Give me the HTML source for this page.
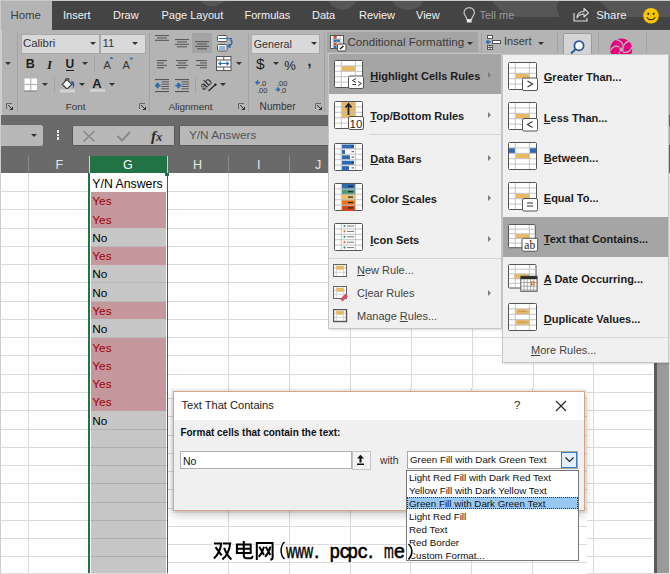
<!DOCTYPE html>
<html><head><meta charset="utf-8">
<style>
*{box-sizing:border-box;margin:0;padding:0}
html,body{width:670px;height:574px;overflow:hidden;background:#fff}
body{position:relative;font-family:"Liberation Sans",sans-serif;color:#222}
.a{position:absolute}
.t{position:absolute;white-space:nowrap;line-height:1}
#tabbar{left:0;top:0;width:670px;height:29.5px;background:#444}
#ribbon{left:0;top:29.5px;width:670px;height:85.5px;background:#b4b4b4}
#fbar{left:0;top:115px;width:670px;height:58px;background:#6a6a6a}
.tab{position:absolute;top:9.5px;font-size:11px;color:#f2f2f2;white-space:nowrap;line-height:1}
.vl{position:absolute;width:1px;background:#9e9e9e}
.hl{position:absolute;height:1px;background:#dadada}
.gl{position:absolute;width:1px;background:#dadada}
.cell{position:absolute;left:89px;width:78px;height:18.3px;font-size:12px;line-height:18.3px;padding-left:3px}
.menu{background:#f0f0f0;border:1px solid #c6c6c6}
.mi{position:absolute;font-size:11px;font-weight:bold;color:#1c1c1c;white-space:nowrap;line-height:1}
.mr{position:absolute;font-size:11px;color:#444;white-space:nowrap;line-height:1}
.arr{position:absolute;width:0;height:0;border-top:3.5px solid transparent;border-bottom:3.5px solid transparent;border-left:3.5px solid #555}
.dd{position:absolute;width:0;height:0;border-left:3px solid transparent;border-right:3px solid transparent;border-top:3px solid #333}
.li{position:absolute;left:2px;font-size:9.8px;color:#111;white-space:nowrap;line-height:12.9px;height:12.9px;width:169px;padding-left:1px}
</style></head><body>
<!-- TAB BAR -->
<div id="tabbar" class="a"></div>
<svg class="a" style="left:0;top:0" width="670" height="30">
<g fill="#565656">
<path d="M200 0 C204 6 212 8 218 5 C222 3 226 0 228 0 Z"/>
<path d="M328 0 C332 8 342 12 350 8 C354 5 356 2 358 0 Z"/>
<path d="M392 0 C396 10 410 13 420 6 L424 0 Z"/>
<path d="M492 0 C498 10 505 17 520 17 L560 17 C556 10 556 4 560 0 Z"/>
<path d="M598 0 C606 6 610 17 630 17 L670 17 L670 0 Z"/>
</g>
</svg>
<div class="a" style="left:0;top:0;width:670px;height:1.2px;background:#c9c9c9"></div>
<div class="a" style="left:0;top:0;width:1.2px;height:30px;background:#c9c9c9"></div>
<div class="a" style="left:1.2px;top:1.2px;width:51px;height:28.5px;background:#b4b4b4"></div>
<div class="tab" style="left:10.5px;top:9.8px;font-size:11.4px;color:#3e3e3e">Home</div>
<div class="tab" style="left:63px">Insert</div>
<div class="tab" style="left:113px">Draw</div>
<div class="tab" style="left:161.5px">Page Layout</div>
<div class="tab" style="left:244.5px">Formulas</div>
<div class="tab" style="left:312px">Data</div>
<div class="tab" style="left:359px">Review</div>
<div class="tab" style="left:416px">View</div>
<svg class="a" style="left:463px;top:6.5px" width="13" height="17"><path d="M3.8 12.5 C3.8 9.5 1 8.5 1 5.5 C1 2.8 3.2 0.8 6.2 0.8 C9.2 0.8 11.4 2.8 11.4 5.5 C11.4 8.5 8.6 9.5 8.6 12.5 Z" fill="none" stroke="#d8d8d8" stroke-width="1.1"/><rect x="3.8" y="12.5" width="4.8" height="3" fill="#e8e8e8"/></svg>
<div class="tab" style="left:479.5px;color:#9a9a9a">Tell me</div>
<svg class="a" style="left:573px;top:7px" width="17" height="15"><path d="M1 6 L1 14 L14 14 L14 11" fill="none" stroke="#e0e0e0" stroke-width="1.1"/><path d="M4 11 C4 6 7.5 4.5 11 4.5 L11 1.5 L15.5 5.8 L11 10 L11 7 C8 7 5.5 8 4 11 Z" fill="none" stroke="#e0e0e0" stroke-width="1.1" stroke-linejoin="round"/></svg>
<div class="tab" style="left:596.3px;font-size:11.3px">Share</div>
<svg class="a" style="left:642px;top:6.5px" width="18" height="18"><circle cx="9" cy="8.8" r="7.8" fill="#f7c600"/><circle cx="6.3" cy="6.8" r="1.1" fill="#3a2a00"/><circle cx="11.7" cy="6.8" r="1.1" fill="#3a2a00"/><path d="M4.8 10.2 C6.5 13.5 11.5 13.5 13.2 10.2" fill="none" stroke="#3a2a00" stroke-width="1.1"/></svg>

<!-- RIBBON -->
<div id="ribbon" class="a"></div>



























































































<!-- RIBBON START -->
<div class="a" style="left:0;top:29.5px;width:1.5px;height:85.5px;background:#cfcfcf"></div>
<div class="dd" style="left:4.6px;top:61.8px;border-top-color:#333"></div>
<svg class="a" style="left:6.0px;top:103px" width="8" height="8"><path d="M0.5 6 L0.5 0.5 L6 0.5" stroke="#666" fill="none" stroke-width="1"/><path d="M2.2 2.2 L6.5 6.5 M3.8 6.5 L6.5 6.5 L6.5 3.8" stroke="#333" fill="none" stroke-width="1"/></svg>
<div class="a" style="left:17px;top:33px;width:1px;height:79px;background:#a2a2a2"></div>
<div class="a" style="left:21px;top:33.6px;width:79px;height:20px;background:#d9d9d9;border:1px solid #a8a8a8"></div>
<div class="a" style="left:100px;top:33.6px;width:45.5px;height:20px;background:#d9d9d9;border:1px solid #a8a8a8"></div>
<div class="t" style="left:23px;top:38.0px;font-size:11.4px;color:#333;">Calibri</div>
<div class="t" style="left:102.5px;top:38.0px;font-size:11.4px;color:#333;">11</div>
<div class="dd" style="left:90px;top:42.0px;border-top-color:#333"></div>
<div class="dd" style="left:131.5px;top:42.0px;border-top-color:#333"></div>
<div class="t" style="left:25.8px;top:58.2px;font-size:12.5px;color:#1e1e1e;font-weight:bold">B</div>
<div class="t" style="left:47px;top:58px;font-size:13px;color:#1e1e1e;font-family:'Liberation Serif';font-style:italic;font-weight:bold">I</div>
<div class="t" style="left:65.5px;top:58.2px;font-size:12px;color:#1e1e1e;font-weight:bold">U</div>
<div class="a" style="left:65.5px;top:69.5px;width:8px;height:1px;background:#222"></div>
<div class="dd" style="left:81.6px;top:61.8px;border-top-color:#333"></div>
<div class="a" style="left:93.5px;top:57px;width:1px;height:15px;background:#a2a2a2"></div>
<div class="t" style="left:103.5px;top:59.5px;font-size:11px;color:#333;">A</div>
<svg class="a" style="left:109px;top:56px" width="5" height="4"><path d="M0.5 3 L2.5 0.8 L4.5 3" fill="#2b6cb5"/></svg>
<div class="t" style="left:122.5px;top:59.5px;font-size:11px;color:#333;">A</div>
<svg class="a" style="left:129px;top:57px" width="5" height="4"><path d="M0.5 0.8 L2.5 3 L4.5 0.8" fill="#2b6cb5"/></svg>
<svg class="a" style="left:23.5px;top:77.5px" width="14" height="15"><rect x="0.5" y="0.5" width="12.5" height="12" fill="#fff"/><line x1="6.75" x2="6.75" y1="0.5" y2="12.5" stroke="#b4b4b4" stroke-width="1.2"/><line x1="0.5" x2="13" y1="6.5" y2="6.5" stroke="#b4b4b4" stroke-width="1.2"/><rect x="0" y="12.5" width="13" height="1.2" fill="#8a8a8a"/></svg>
<div class="dd" style="left:42px;top:82.5px;border-top-color:#333"></div>
<div class="a" style="left:53.5px;top:77px;width:1px;height:16px;background:#a2a2a2"></div>
<svg class="a" style="left:60px;top:76px" width="17" height="17"><path d="M2.3 8.4 L7 3.7 L11.8 8.5 L7 13 Z" fill="#fff" stroke="#3a3a3a" stroke-width="1.1"/><path d="M5.3 5.3 C4.8 2 8.8 1.3 9.3 4.5" stroke="#444" fill="none" stroke-width="1.1"/><path d="M11.3 4.8 C14.8 5.5 15.3 9.5 12.8 12.5 C13.3 10 12.5 8 11.3 7.3 Z" fill="#2b5fa8"/><rect x="0" y="13.2" width="15" height="3.3" fill="#d2d2d2"/></svg>
<div class="dd" style="left:79.3px;top:82.5px;border-top-color:#333"></div>
<div class="t" style="left:92.3px;top:76.8px;font-size:13px;color:#1e1e1e;font-weight:bold">A</div>
<div class="a" style="left:90px;top:89px;width:15px;height:3px;background:#d0d0d0"></div>
<div class="dd" style="left:108.8px;top:82.5px;border-top-color:#333"></div>
<div class="t" style="left:65.8px;top:102.2px;font-size:9.8px;color:#333;">Font</div>
<svg class="a" style="left:138.5px;top:103px" width="8" height="8"><path d="M0.5 6 L0.5 0.5 L6 0.5" stroke="#666" fill="none" stroke-width="1"/><path d="M2.2 2.2 L6.5 6.5 M3.8 6.5 L6.5 6.5 L6.5 3.8" stroke="#333" fill="none" stroke-width="1"/></svg>
<div class="a" style="left:148.8px;top:33px;width:1px;height:79px;background:#a2a2a2"></div>
<svg class="a" style="left:155px;top:35.2px" width="16" height="16"><rect x="0" y="0.00" width="14" height="1.1" fill="#5a5a5a"/><rect x="2" y="2.40" width="10" height="1.1" fill="#5a5a5a"/><rect x="0" y="4.80" width="14" height="1.1" fill="#5a5a5a"/></svg>
<svg class="a" style="left:175px;top:38.6px" width="16" height="16"><rect x="0" y="0.00" width="14" height="1.1" fill="#5a5a5a"/><rect x="2" y="2.40" width="10" height="1.1" fill="#5a5a5a"/><rect x="0" y="4.80" width="14" height="1.1" fill="#5a5a5a"/><rect x="2" y="7.20" width="10" height="1.1" fill="#5a5a5a"/></svg>
<div class="a" style="left:191.8px;top:33px;width:20.2px;height:19.8px;background:#a4a4a4"></div>
<svg class="a" style="left:195px;top:41.2px" width="16" height="16"><rect x="0" y="0.00" width="14" height="1.1" fill="#5a5a5a"/><rect x="2" y="2.40" width="10" height="1.1" fill="#5a5a5a"/><rect x="0" y="4.80" width="14" height="1.1" fill="#5a5a5a"/><rect x="2" y="7.20" width="10" height="1.1" fill="#5a5a5a"/></svg>
<svg class="a" style="left:216px;top:34.5px" width="18" height="17"><rect x="1.5" y="0.5" width="9.5" height="6" rx="1" fill="#fff" stroke="#555"/><rect x="1.5" y="9.5" width="9.5" height="6.5" rx="1" fill="#fff" stroke="#555"/><line x1="3" x2="16" y1="3.5" y2="3.5" stroke="#2b6cb5" stroke-width="1"/><line x1="3" x2="9.5" y1="12" y2="12" stroke="#2b6cb5" stroke-width="1"/><line x1="3" x2="9.5" y1="14" y2="14" stroke="#2b6cb5" stroke-width="1"/><path d="M14 4.5 C17 6 16.5 10 12.5 11 M14 9 L12 11 L14.5 12.5" stroke="#2b6cb5" stroke-width="1.5" fill="none"/></svg>
<svg class="a" style="left:157px;top:59.8px" width="16" height="16"><rect x="0" y="0.00" width="10" height="1.1" fill="#5a5a5a"/><rect x="0" y="2.40" width="7" height="1.1" fill="#5a5a5a"/><rect x="0" y="4.80" width="10" height="1.1" fill="#5a5a5a"/><rect x="0" y="7.20" width="7" height="1.1" fill="#5a5a5a"/></svg>
<svg class="a" style="left:176px;top:59.8px" width="16" height="16"><rect x="0" y="0.00" width="12" height="1.1" fill="#5a5a5a"/><rect x="2" y="2.40" width="8" height="1.1" fill="#5a5a5a"/><rect x="0" y="4.80" width="12" height="1.1" fill="#5a5a5a"/><rect x="2" y="7.20" width="8" height="1.1" fill="#5a5a5a"/></svg>
<svg class="a" style="left:196px;top:59.8px" width="16" height="16"><rect x="0" y="0.00" width="11" height="1.1" fill="#5a5a5a"/><rect x="4" y="2.40" width="7" height="1.1" fill="#5a5a5a"/><rect x="0" y="4.80" width="11" height="1.1" fill="#5a5a5a"/><rect x="4" y="7.20" width="7" height="1.1" fill="#5a5a5a"/></svg>
<svg class="a" style="left:215.5px;top:56px" width="16" height="15"><rect x="0.5" y="0.5" width="14.5" height="14" fill="#fff" stroke="#555"/><line x1="1" x2="15" y1="4" y2="4" stroke="#555"/><line x1="1" x2="15" y1="11" y2="11" stroke="#555"/><line x1="7.75" x2="7.75" y1="0.5" y2="4" stroke="#555"/><line x1="7.75" x2="7.75" y1="11" y2="14.5" stroke="#555"/><path d="M3 7.5 L12.5 7.5 M5 5.8 L3 7.5 L5 9.2 M10.5 5.8 L12.5 7.5 L10.5 9.2" stroke="#2b6cb5" stroke-width="1.2" fill="none"/></svg>
<div class="dd" style="left:235.5px;top:62.0px;border-top-color:#333"></div>
<svg class="a" style="left:155px;top:78.5px" width="16" height="14"><rect x="0" y="0" width="14" height="1.1" fill="#555"/><rect x="6.5" y="2.4" width="7.5" height="1" fill="#5a5a5a"/><rect x="6.5" y="4.7" width="7.5" height="1" fill="#5a5a5a"/><rect x="6.5" y="7.0" width="7.5" height="1" fill="#5a5a5a"/><rect x="6.5" y="9.3" width="7.5" height="1" fill="#5a5a5a"/><rect x="0" y="12" width="14" height="1.1" fill="#555"/><path d="M1 6.5 L5.5 6.5 M3.4 4 L0.8 6.5 L3.4 9" stroke="#2b6cb5" stroke-width="1.8" fill="none"/></svg>
<svg class="a" style="left:175px;top:78.5px" width="16" height="14"><rect x="0" y="0" width="14" height="1.1" fill="#555"/><rect x="6.5" y="2.4" width="7.5" height="1" fill="#5a5a5a"/><rect x="6.5" y="4.7" width="7.5" height="1" fill="#5a5a5a"/><rect x="6.5" y="7.0" width="7.5" height="1" fill="#5a5a5a"/><rect x="6.5" y="9.3" width="7.5" height="1" fill="#5a5a5a"/><rect x="0" y="12" width="14" height="1.1" fill="#555"/><path d="M0.5 6.5 L5 6.5 M2.6 4 L5.2 6.5 L2.6 9" stroke="#2b6cb5" stroke-width="1.8" fill="none"/></svg>
<div class="a" style="left:195.4px;top:77px;width:1px;height:16px;background:#a2a2a2"></div>
<svg class="a" style="left:201px;top:75.5px" width="18" height="17"><text x="0" y="0" font-size="11" font-family="Liberation Sans" fill="#222" transform="translate(2.8,14.8) rotate(-45)">ab</text><path d="M7.5 15 L13.5 9.5" stroke="#222" stroke-width="1.2" fill="none"/><circle cx="14.3" cy="8.8" r="1.3" fill="#222"/></svg>
<div class="dd" style="left:219.5px;top:82.5px;border-top-color:#333"></div>
<div class="t" style="left:168.5px;top:102.2px;font-size:9.9px;color:#333;">Alignment</div>
<svg class="a" style="left:237.5px;top:103px" width="8" height="8"><path d="M0.5 6 L0.5 0.5 L6 0.5" stroke="#666" fill="none" stroke-width="1"/><path d="M2.2 2.2 L6.5 6.5 M3.8 6.5 L6.5 6.5 L6.5 3.8" stroke="#333" fill="none" stroke-width="1"/></svg>
<div class="a" style="left:247.5px;top:33px;width:1px;height:79px;background:#a2a2a2"></div>
<div class="a" style="left:251.3px;top:33.6px;width:69px;height:20px;background:#d9d9d9;border:1px solid #a8a8a8"></div>
<div class="t" style="left:253.8px;top:38.5px;font-size:10.7px;color:#333;">General</div>
<div class="dd" style="left:311px;top:42.0px;border-top-color:#333"></div>
<div class="t" style="left:256px;top:56.3px;font-size:15.5px;color:#222;">$</div>
<div class="dd" style="left:272.5px;top:62.0px;border-top-color:#333"></div>
<div class="t" style="left:284.3px;top:58.6px;font-size:13px;color:#222;">%</div>
<div class="t" style="left:307.5px;top:53.8px;font-size:14px;color:#222;font-weight:bold">,</div>
<svg class="a" style="left:255px;top:79px" width="18" height="15"><path d="M1 3.5 L5 3.5 M3 1.5 L1 3.5 L3 5.5" stroke="#2b6cb5" stroke-width="1.4" fill="none"/><text x="5" y="6.8" font-size="7.5" font-family="Liberation Sans" fill="#333">.0</text><text x="2" y="13.5" font-size="7.5" font-family="Liberation Sans" fill="#333">.00</text></svg>
<svg class="a" style="left:275px;top:79px" width="18" height="15"><text x="2" y="6.8" font-size="7.5" font-family="Liberation Sans" fill="#333">.00</text><path d="M0.5 10.5 L4.5 10.5 M2.5 8.5 L4.5 10.5 L2.5 12.5" stroke="#2b6cb5" stroke-width="1.4" fill="none"/><text x="5" y="13.5" font-size="7.5" font-family="Liberation Sans" fill="#333">.0</text></svg>
<div class="t" style="left:259.6px;top:102.1px;font-size:10.1px;color:#333;">Number</div>
<svg class="a" style="left:314.5px;top:103px" width="8" height="8"><path d="M0.5 6 L0.5 0.5 L6 0.5" stroke="#666" fill="none" stroke-width="1"/><path d="M2.2 2.2 L6.5 6.5 M3.8 6.5 L6.5 6.5 L6.5 3.8" stroke="#333" fill="none" stroke-width="1"/></svg>
<div class="a" style="left:323.8px;top:33px;width:1px;height:79px;background:#a2a2a2"></div>
<div class="a" style="left:327px;top:32px;width:150.6px;height:20px;background:#a4a4a4"></div>
<svg class="a" style="left:330px;top:35px" width="17" height="17"><rect x="0.5" y="0.5" width="13" height="13" fill="#fff" stroke="#555"/><rect x="3.5" y="1" width="3.2" height="2.8" fill="#e04020"/><rect x="3.5" y="4.3" width="6.5" height="2.8" fill="#2b6cb5"/><rect x="3.5" y="7.6" width="3.2" height="2.8" fill="#e04020"/><rect x="3.5" y="10.6" width="3.2" height="2.6" fill="#2b6cb5"/><g stroke="#aaa" stroke-width="0.6"><line x1="3.3" x2="3.3" y1="1" y2="13"/><line x1="6.9" x2="6.9" y1="1" y2="13"/><line x1="10.2" x2="10.2" y1="1" y2="13"/><line x1="1" x2="13" y1="4" y2="4"/><line x1="1" x2="13" y1="7.3" y2="7.3"/><line x1="1" x2="13" y1="10.4" y2="10.4"/></g><rect x="7.5" y="9" width="8.5" height="7" fill="#fff" stroke="#444" rx="1"/><path d="M10 14 L13.5 11" stroke="#222" stroke-width="1.6"/></svg>
<div class="t" style="left:347.5px;top:36.3px;font-size:11.6px;color:#3a3a3a;">Conditional Formatting</div>
<div class="dd" style="left:467px;top:42.0px;border-top-color:#333"></div>
<div class="a" style="left:480.8px;top:33px;width:1px;height:79px;background:#a2a2a2"></div>
<svg class="a" style="left:486px;top:35px" width="16" height="16"><rect x="1.5" y="0.5" width="5" height="3" fill="#fff" stroke="#555"/><rect x="1.5" y="10.5" width="5" height="4" fill="#fff" stroke="#555"/><line x1="4" x2="4" y1="10.5" y2="14.5" stroke="#555"/><line x1="1.5" x2="6.5" y1="12.5" y2="12.5" stroke="#555"/><rect x="6.5" y="5.5" width="8" height="3" fill="#fff" stroke="#555"/><path d="M0.5 7 L5 7 M2.5 5 L0.5 7 L2.5 9" stroke="#2b6cb5" stroke-width="1.4" fill="none"/></svg>
<div class="t" style="left:504px;top:36.4px;font-size:11px;color:#3a3a3a;">Insert</div>
<div class="dd" style="left:538px;top:42.0px;border-top-color:#333"></div>
<div class="a" style="left:557.2px;top:33px;width:1px;height:20px;background:#a2a2a2"></div>
<div class="a" style="left:562.9px;top:32.8px;width:28.7px;height:24px;background:#d4d4d4;border:1px solid #9a9a9a;border-radius:2px"></div>
<svg class="a" style="left:568px;top:38px" width="18" height="18"><circle cx="11" cy="7.7" r="4.6" fill="#fff" stroke="#2b579a" stroke-width="1.8"/><line x1="7.8" y1="11" x2="3" y2="15.5" stroke="#2b579a" stroke-width="2"/></svg>
<div class="a" style="left:597.5px;top:33px;width:1px;height:20px;background:#a2a2a2"></div>
<svg class="a" style="left:609px;top:37px" width="25" height="17"><circle cx="12.2" cy="12.4" r="11" fill="#e6007e"/><g stroke="#b4b4b4" stroke-width="1.3" fill="none"><path d="M7 2.5 C11 3 14 6 14.5 11"/><path d="M1.5 13.5 C3.5 9.5 7 8.5 10.5 10"/><path d="M23 10 C21.5 14 18 16 14 15"/><path d="M10.5 15 C10.5 17 10 18 9 19"/><path d="M22 4 C19 4 16 6 14.5 9"/></g><rect x="10.5" y="10.5" width="4" height="4" fill="#b4b4b4"/></svg>
<div class="a" style="left:645.8px;top:33px;width:1px;height:20px;background:#a2a2a2"></div>
<!-- RIBBON END -->



<!-- GRID START -->
<div id="fbar" class="a"></div>
<div id="grid" class="a" style="left:0;top:173.2px;width:670px;height:401px;background:#fff"></div>
<div class="a" style="left:0;top:124.7px;width:43px;height:21.6px;background:#b8b8b8;border-radius:0 2px 2px 0"></div>
<div class="dd" style="left:31px;top:134px;border-top-color:#333"></div>
<div class="a" style="left:56.5px;top:130px;width:2.5px;height:2.5px;background:#f0f0f0"></div>
<div class="a" style="left:56.5px;top:133.5px;width:2.5px;height:2.5px;background:#f0f0f0"></div>
<div class="a" style="left:56.5px;top:137px;width:2.5px;height:2.5px;background:#f0f0f0"></div>
<div class="a" style="left:71.5px;top:124.7px;width:103.8px;height:21.6px;background:#b8b8b8;border-radius:2px;border:1px solid #575757;border-top-color:#626262"></div>
<div class="a" style="left:178.9px;top:124.7px;width:500px;height:21.6px;background:#b8b8b8;border-radius:2px;border:1px solid #575757;border-top-color:#626262"></div>
<div class="t" style="left:188.9px;top:130px;font-size:11.8px;color:#555">Y/N Answers</div>
<svg class="a" style="left:81px;top:127.5px" width="16" height="16"><path d="M2.5 3 L13.5 13.5 M13.5 3 L2.5 13.5" stroke="#8a8a8a" stroke-width="1.7"/></svg>
<svg class="a" style="left:115px;top:127.5px" width="18" height="16"><path d="M2.5 8 L7 12.5 L15 4" stroke="#8a8a8a" stroke-width="2" fill="none"/></svg>
<div class="t" style="left:151px;top:127.5px;font-family:'Liberation Serif';font-style:italic;font-weight:bold;font-size:15.5px;color:#2a2a2a">f<span style="font-size:12px">x</span></div>
<div class="a" style="left:27.7px;top:156px;width:1px;height:17.2px;background:#8a8a8a"></div>
<div class="a" style="left:228.1px;top:156px;width:1px;height:17.2px;background:#8a8a8a"></div>
<div class="a" style="left:289.0px;top:156px;width:1px;height:17.2px;background:#8a8a8a"></div>
<div class="a" style="left:89px;top:155.9px;width:78.5px;height:17.3px;background:#c8d8ce"></div>
<div class="a" style="left:89.6px;top:155.9px;width:77.1px;height:17.3px;background:#217346"></div>
<div class="t" style="left:55.5px;top:158.6px;font-size:12.5px;color:#e8e8e8">F</div>
<div class="t" style="left:123px;top:158.6px;font-size:12.5px;color:#fff">G</div>
<div class="t" style="left:193px;top:158.6px;font-size:12.5px;color:#e8e8e8">H</div>
<div class="t" style="left:257px;top:158.6px;font-size:12.5px;color:#e8e8e8">I</div>
<div class="t" style="left:315px;top:158.6px;font-size:12.5px;color:#e8e8e8">J</div>
<div class="hl" style="left:0;top:191.0px;width:653px"></div>
<div class="hl" style="left:0;top:209.2px;width:653px"></div>
<div class="hl" style="left:0;top:227.5px;width:653px"></div>
<div class="hl" style="left:0;top:245.8px;width:653px"></div>
<div class="hl" style="left:0;top:264.0px;width:653px"></div>
<div class="hl" style="left:0;top:282.3px;width:653px"></div>
<div class="hl" style="left:0;top:300.6px;width:653px"></div>
<div class="hl" style="left:0;top:318.9px;width:653px"></div>
<div class="hl" style="left:0;top:337.1px;width:653px"></div>
<div class="hl" style="left:0;top:355.4px;width:653px"></div>
<div class="hl" style="left:0;top:373.7px;width:653px"></div>
<div class="hl" style="left:0;top:391.9px;width:653px"></div>
<div class="hl" style="left:0;top:410.2px;width:653px"></div>
<div class="hl" style="left:0;top:428.5px;width:653px"></div>
<div class="hl" style="left:0;top:446.8px;width:653px"></div>
<div class="hl" style="left:0;top:465.0px;width:653px"></div>
<div class="hl" style="left:0;top:483.3px;width:653px"></div>
<div class="hl" style="left:0;top:501.6px;width:653px"></div>
<div class="hl" style="left:0;top:519.8px;width:653px"></div>
<div class="hl" style="left:0;top:538.1px;width:653px"></div>
<div class="hl" style="left:0;top:556.4px;width:653px"></div>
<div class="hl" style="left:0;top:574.6px;width:653px"></div>
<div class="gl" style="left:27.7px;top:173.2px;height:401px"></div>
<div class="gl" style="left:166.8px;top:173.2px;height:401px"></div>
<div class="gl" style="left:228.1px;top:173.2px;height:401px"></div>
<div class="gl" style="left:289.0px;top:173.2px;height:401px"></div>
<div class="gl" style="left:350.2px;top:173.2px;height:401px"></div>
<div class="gl" style="left:410.5px;top:173.2px;height:401px"></div>
<div class="gl" style="left:471.5px;top:173.2px;height:401px"></div>
<div class="gl" style="left:532.5px;top:173.2px;height:401px"></div>
<div class="gl" style="left:593.2px;top:173.2px;height:401px"></div>
<div class="a" style="left:90.5px;top:173.2px;width:75.5px;height:18.4px;background:#fff"></div>
<div class="a" style="left:90.5px;top:191.5px;width:75.5px;height:18.4px;background:#c4989c"></div>
<div class="a" style="left:90.5px;top:209.7px;width:75.5px;height:18.4px;background:#c4989c"></div>
<div class="a" style="left:90.5px;top:228.0px;width:75.5px;height:18.4px;background:#c6c6c6"></div>
<div class="a" style="left:90.5px;top:246.3px;width:75.5px;height:18.4px;background:#c4989c"></div>
<div class="a" style="left:90.5px;top:264.5px;width:75.5px;height:18.4px;background:#c6c6c6"></div>
<div class="a" style="left:90.5px;top:282.8px;width:75.5px;height:18.4px;background:#c6c6c6"></div>
<div class="a" style="left:90.5px;top:301.1px;width:75.5px;height:18.4px;background:#c4989c"></div>
<div class="a" style="left:90.5px;top:319.4px;width:75.5px;height:18.4px;background:#c6c6c6"></div>
<div class="a" style="left:90.5px;top:337.6px;width:75.5px;height:18.4px;background:#c4989c"></div>
<div class="a" style="left:90.5px;top:355.9px;width:75.5px;height:18.4px;background:#c4989c"></div>
<div class="a" style="left:90.5px;top:374.2px;width:75.5px;height:18.4px;background:#c4989c"></div>
<div class="a" style="left:90.5px;top:392.4px;width:75.5px;height:18.4px;background:#c4989c"></div>
<div class="a" style="left:90.5px;top:410.7px;width:75.5px;height:18.4px;background:#c6c6c6"></div>
<div class="a" style="left:90.5px;top:429.0px;width:75.5px;height:18.4px;background:#c6c6c6"></div>
<div class="a" style="left:90.5px;top:447.2px;width:75.5px;height:18.4px;background:#c6c6c6"></div>
<div class="a" style="left:90.5px;top:465.5px;width:75.5px;height:18.4px;background:#c6c6c6"></div>
<div class="a" style="left:90.5px;top:483.8px;width:75.5px;height:18.4px;background:#c6c6c6"></div>
<div class="a" style="left:90.5px;top:502.1px;width:75.5px;height:18.4px;background:#c6c6c6"></div>
<div class="a" style="left:90.5px;top:520.3px;width:75.5px;height:18.4px;background:#c6c6c6"></div>
<div class="a" style="left:90.5px;top:538.6px;width:75.5px;height:18.4px;background:#c6c6c6"></div>
<div class="a" style="left:90.5px;top:556.9px;width:75.5px;height:18.4px;background:#c6c6c6"></div>
<div class="a" style="left:90.5px;top:428.5px;width:75.5px;height:1px;background:#b0b0b0"></div>
<div class="a" style="left:90.5px;top:446.8px;width:75.5px;height:1px;background:#b0b0b0"></div>
<div class="a" style="left:90.5px;top:465.0px;width:75.5px;height:1px;background:#b0b0b0"></div>
<div class="a" style="left:90.5px;top:483.3px;width:75.5px;height:1px;background:#b0b0b0"></div>
<div class="a" style="left:90.5px;top:501.6px;width:75.5px;height:1px;background:#b0b0b0"></div>
<div class="a" style="left:90.5px;top:519.8px;width:75.5px;height:1px;background:#b0b0b0"></div>
<div class="a" style="left:90.5px;top:538.1px;width:75.5px;height:1px;background:#b0b0b0"></div>
<div class="a" style="left:90.5px;top:556.4px;width:75.5px;height:1px;background:#b0b0b0"></div>
<div class="a" style="left:90.5px;top:574.6px;width:75.5px;height:1px;background:#b0b0b0"></div>
<div class="a" style="left:90.5px;top:245.8px;width:75.5px;height:1px;background:#b8b8b8"></div>
<div class="a" style="left:90.5px;top:282.3px;width:75.5px;height:1px;background:#b8b8b8"></div>
<div class="a" style="left:90.5px;top:300.6px;width:75.5px;height:1px;background:#b8b8b8"></div>
<div class="a" style="left:90.5px;top:337.1px;width:75.5px;height:1px;background:#b8b8b8"></div>
<div class="t" style="left:92.3px;top:178.1px;font-size:12.3px;color:#000">Y/N Answers</div>
<div class="t" style="left:92.3px;top:196.4px;font-size:11.8px;color:#9c0006">Yes</div>
<div class="t" style="left:92.3px;top:214.6px;font-size:11.8px;color:#9c0006">Yes</div>
<div class="t" style="left:92.3px;top:232.9px;font-size:11.8px;color:#000">No</div>
<div class="t" style="left:92.3px;top:251.2px;font-size:11.8px;color:#9c0006">Yes</div>
<div class="t" style="left:92.3px;top:269.4px;font-size:11.8px;color:#000">No</div>
<div class="t" style="left:92.3px;top:287.7px;font-size:11.8px;color:#000">No</div>
<div class="t" style="left:92.3px;top:306.0px;font-size:11.8px;color:#9c0006">Yes</div>
<div class="t" style="left:92.3px;top:324.3px;font-size:11.8px;color:#000">No</div>
<div class="t" style="left:92.3px;top:342.5px;font-size:11.8px;color:#9c0006">Yes</div>
<div class="t" style="left:92.3px;top:360.8px;font-size:11.8px;color:#9c0006">Yes</div>
<div class="t" style="left:92.3px;top:379.1px;font-size:11.8px;color:#9c0006">Yes</div>
<div class="t" style="left:92.3px;top:397.3px;font-size:11.8px;color:#9c0006">Yes</div>
<div class="t" style="left:92.3px;top:415.6px;font-size:11.8px;color:#000">No</div>
<div class="a" style="left:88.3px;top:172.5px;width:1.7px;height:402px;background:#217346"></div>
<div class="a" style="left:166.7px;top:176px;width:1.8px;height:398px;background:#217346"></div>
<div class="a" style="left:165.3px;top:172.8px;width:3.8px;height:3.7px;background:#217346"></div>
<div class="a" style="left:653.5px;top:362px;width:3.2px;height:212px;background:#5a5a5a"></div>
<div class="a" style="left:656.7px;top:362px;width:12px;height:212px;background:#9a9a9a"></div>
<div class="a" style="left:668.7px;top:362px;width:1.3px;height:212px;background:#e6e6e6"></div>
<div class="a" style="left:0;top:0;width:1.2px;height:574px;background:#cdcdcd"></div>
<div class="a" style="left:0;top:573px;width:670px;height:1px;background:#dcdcdc"></div>
<!-- GRID END -->
<!-- MENU START -->
<div class="a menu" style="left:327.5px;top:53px;width:174.5px;height:275.5px;box-shadow:1px 1px 2px rgba(0,0,0,.15)"></div>
<div class="a" style="left:328.5px;top:54.3px;width:172.5px;height:39.8px;background:#a5a5a5"></div>
<div class="a" style="left:369px;top:134px;width:132px;height:1px;background:#d6d6d6"></div>
<div class="a" style="left:328.5px;top:257.5px;width:172.5px;height:1px;background:#d6d6d6"></div>
<div class="mi" style="left:370.3px;top:70.6px"><u>H</u>ighlight Cells Rules</div>
<div class="arr" style="left:488px;top:71.9px;border-left-color:#7c7c7c"></div>
<div class="mi" style="left:370.3px;top:110.8px"><u>T</u>op/Bottom Rules</div>
<div class="arr" style="left:488px;top:112.1px;border-left-color:#7c7c7c"></div>
<div class="mi" style="left:370.3px;top:153.5px"><u>D</u>ata Bars</div>
<div class="arr" style="left:488px;top:154.8px;border-left-color:#7c7c7c"></div>
<div class="mi" style="left:370.3px;top:194.0px">Color <u>S</u>cales</div>
<div class="arr" style="left:488px;top:195.3px;border-left-color:#7c7c7c"></div>
<div class="mi" style="left:370.3px;top:234.5px"><u>I</u>con Sets</div>
<div class="arr" style="left:488px;top:235.8px;border-left-color:#7c7c7c"></div>
<svg class="a" style="left:334px;top:60.3px" width="40" height="33" viewBox="0 0 40 33"><rect x="0.5" y="0.5" width="28" height="27" fill="#fff" stroke="#555" stroke-width="1" rx="1"/><rect x="8" y="5.9" width="13" height="5.4" fill="#e8b964" rx="1"/><line x1="1" x2="28" y1="5.90" y2="5.90" stroke="#bdbdbd" stroke-width="0.9"/><line x1="1" x2="28" y1="11.30" y2="11.30" stroke="#bdbdbd" stroke-width="0.9"/><line x1="1" x2="28" y1="16.70" y2="16.70" stroke="#bdbdbd" stroke-width="0.9"/><line x1="1" x2="28" y1="22.10" y2="22.10" stroke="#bdbdbd" stroke-width="0.9"/><line x1="7.3" x2="7.3" y1="1" y2="27" stroke="#bdbdbd" stroke-width="0.9"/><line x1="21.4" x2="21.4" y1="1" y2="27" stroke="#bdbdbd" stroke-width="0.9"/><rect x="14.5" y="16" width="15" height="12.5" rx="1.5" fill="#fff" stroke="#555" stroke-width="1"/><path d="M22 18.5 L18.5 20.5 L22 22.5 M18.5 24.5 L22 24.5 M24 21.5 L27.5 23.5 L24 25.5" stroke="#333" stroke-width="1" fill="none"/></svg>
<svg class="a" style="left:334px;top:101px" width="40" height="33" viewBox="0 0 40 33"><rect x="0.5" y="0.5" width="28" height="27" fill="#fff" stroke="#555" stroke-width="1" rx="1"/><rect x="8" y="1" width="13" height="16.2" fill="#e8b964"/><line x1="1" x2="28" y1="5.90" y2="5.90" stroke="#bdbdbd" stroke-width="0.9"/><line x1="1" x2="28" y1="11.30" y2="11.30" stroke="#bdbdbd" stroke-width="0.9"/><line x1="1" x2="28" y1="16.70" y2="16.70" stroke="#bdbdbd" stroke-width="0.9"/><line x1="1" x2="28" y1="22.10" y2="22.10" stroke="#bdbdbd" stroke-width="0.9"/><line x1="7.3" x2="7.3" y1="1" y2="27" stroke="#bdbdbd" stroke-width="0.9"/><line x1="21.4" x2="21.4" y1="1" y2="27" stroke="#bdbdbd" stroke-width="0.9"/><path d="M14.5 3 L14.5 14 M11.5 6.5 L14.5 3 L17.5 6.5" stroke="#222" stroke-width="1.8" fill="none"/><rect x="14.5" y="15.5" width="15" height="13" rx="1.5" fill="#fff" stroke="#555" stroke-width="1"/><text x="22" y="26.5" font-size="11.5" text-anchor="middle" font-family="Liberation Sans" fill="#222">10</text></svg>
<svg class="a" style="left:334px;top:142.5px" width="40" height="33" viewBox="0 0 40 33"><rect x="0.5" y="0.5" width="28" height="27" fill="#fff" stroke="#555" stroke-width="1" rx="1"/><rect x="8" y="1.5" width="12" height="4.2" fill="#2e6ab1"/><line x1="17.5" x2="20" y1="3.3" y2="3.3" stroke="#333" stroke-width="0.9"/><rect x="8" y="6.9" width="3" height="4.2" fill="#2e6ab1"/><line x1="17.5" x2="20" y1="8.7" y2="8.7" stroke="#333" stroke-width="0.9"/><rect x="8" y="12.3" width="8" height="4.2" fill="#2e6ab1"/><line x1="17.5" x2="20" y1="14.1" y2="14.1" stroke="#333" stroke-width="0.9"/><rect x="8" y="17.7" width="12" height="4.2" fill="#2e6ab1"/><line x1="17.5" x2="20" y1="19.5" y2="19.5" stroke="#333" stroke-width="0.9"/><rect x="8" y="23.1" width="7" height="4.2" fill="#2e6ab1"/><line x1="17.5" x2="20" y1="24.9" y2="24.9" stroke="#333" stroke-width="0.9"/><line x1="1" x2="28" y1="5.90" y2="5.90" stroke="#bdbdbd" stroke-width="0.9"/><line x1="1" x2="28" y1="11.30" y2="11.30" stroke="#bdbdbd" stroke-width="0.9"/><line x1="1" x2="28" y1="16.70" y2="16.70" stroke="#bdbdbd" stroke-width="0.9"/><line x1="1" x2="28" y1="22.10" y2="22.10" stroke="#bdbdbd" stroke-width="0.9"/><line x1="7.3" x2="7.3" y1="1" y2="27" stroke="#bdbdbd" stroke-width="0.9"/><line x1="21.4" x2="21.4" y1="1" y2="27" stroke="#bdbdbd" stroke-width="0.9"/></svg>
<svg class="a" style="left:334px;top:182.8px" width="40" height="33" viewBox="0 0 40 33"><rect x="0.5" y="0.5" width="28" height="27" fill="#fff" stroke="#555" stroke-width="1" rx="1"/><rect x="8" y="1.0" width="13" height="5.4" fill="#2e6ab1"/><line x1="14" x2="19" y1="3.3" y2="3.3" stroke="#222" stroke-width="1.2"/><rect x="8" y="6.4" width="13" height="5.4" fill="#4e9a78"/><line x1="14" x2="19" y1="8.7" y2="8.7" stroke="#222" stroke-width="1.2"/><rect x="8" y="11.8" width="13" height="5.4" fill="#f0c070"/><line x1="14" x2="19" y1="14.1" y2="14.1" stroke="#222" stroke-width="1.2"/><rect x="8" y="17.2" width="13" height="5.4" fill="#e57319"/><line x1="14" x2="19" y1="19.5" y2="19.5" stroke="#222" stroke-width="1.2"/><rect x="8" y="22.6" width="13" height="5.4" fill="#d2461e"/><line x1="14" x2="19" y1="24.9" y2="24.9" stroke="#222" stroke-width="1.2"/><line x1="1" x2="28" y1="5.90" y2="5.90" stroke="#bdbdbd" stroke-width="0.9"/><line x1="1" x2="28" y1="11.30" y2="11.30" stroke="#bdbdbd" stroke-width="0.9"/><line x1="1" x2="28" y1="16.70" y2="16.70" stroke="#bdbdbd" stroke-width="0.9"/><line x1="1" x2="28" y1="22.10" y2="22.10" stroke="#bdbdbd" stroke-width="0.9"/><line x1="7.3" x2="7.3" y1="1" y2="27" stroke="#bdbdbd" stroke-width="0.9"/><line x1="21.4" x2="21.4" y1="1" y2="27" stroke="#bdbdbd" stroke-width="0.9"/></svg>
<svg class="a" style="left:334px;top:222.9px" width="40" height="33" viewBox="0 0 40 33"><rect x="0.5" y="0.5" width="28" height="27" fill="#fff" stroke="#555" stroke-width="1" rx="1"/><circle cx="10.5" cy="3.0" r="1.1" fill="#2a8a5a"/><line x1="13" x2="20" y1="3.0" y2="3.0" stroke="#666" stroke-width="0.9"/><circle cx="10.5" cy="8.4" r="1.1" fill="#e57319"/><line x1="13" x2="20" y1="8.4" y2="8.4" stroke="#666" stroke-width="0.9"/><circle cx="10.5" cy="13.8" r="1.1" fill="#2a8a5a"/><line x1="13" x2="20" y1="13.8" y2="13.8" stroke="#666" stroke-width="0.9"/><circle cx="10.5" cy="19.2" r="1.1" fill="#e57319"/><line x1="13" x2="20" y1="19.2" y2="19.2" stroke="#666" stroke-width="0.9"/><circle cx="10.5" cy="24.6" r="1.1" fill="#2a8a5a"/><line x1="13" x2="20" y1="24.6" y2="24.6" stroke="#666" stroke-width="0.9"/><line x1="1" x2="28" y1="5.90" y2="5.90" stroke="#bdbdbd" stroke-width="0.9"/><line x1="1" x2="28" y1="11.30" y2="11.30" stroke="#bdbdbd" stroke-width="0.9"/><line x1="1" x2="28" y1="16.70" y2="16.70" stroke="#bdbdbd" stroke-width="0.9"/><line x1="1" x2="28" y1="22.10" y2="22.10" stroke="#bdbdbd" stroke-width="0.9"/><line x1="7.3" x2="7.3" y1="1" y2="27" stroke="#bdbdbd" stroke-width="0.9"/><line x1="21.4" x2="21.4" y1="1" y2="27" stroke="#bdbdbd" stroke-width="0.9"/></svg>
<div class="mr" style="left:357px;top:265.4px"><u>N</u>ew Rule...</div>
<div class="mr" style="left:357px;top:288.2px">C<u>l</u>ear Rules</div>
<div class="arr" style="left:488px;top:289.5px;border-left-color:#7c7c7c"></div>
<div class="mr" style="left:357px;top:311.4px">Manage <u>R</u>ules...</div>
<svg class="a" style="left:332.8px;top:263.5px" width="20" height="18"><rect x="0.5" y="0.5" width="13" height="12" fill="#fff" stroke="#666" stroke-width="1"/><g stroke="#c8c8c8" stroke-width="0.8"><line x1="1" x2="13" y1="4.3" y2="4.3"/><line x1="1" x2="13" y1="8.3" y2="8.3"/><line x1="3.3" x2="3.3" y1="1" y2="12"/><line x1="10.7" x2="10.7" y1="1" y2="12"/></g><rect x="3.3" y="1.8" width="7.4" height="4" rx="0.8" fill="#e8b964"/></svg>
<svg class="a" style="left:332.5px;top:286px" width="20" height="18"><rect x="0.5" y="0.5" width="13" height="12" fill="#fff" stroke="#666" stroke-width="1"/><g stroke="#c8c8c8" stroke-width="0.8"><line x1="1" x2="13" y1="4.3" y2="4.3"/><line x1="1" x2="13" y1="8.3" y2="8.3"/><line x1="3.3" x2="3.3" y1="1" y2="12"/><line x1="10.7" x2="10.7" y1="1" y2="12"/></g><rect x="3.3" y="1.8" width="7.4" height="4" rx="0.8" fill="#e8b964"/><path d="M7 13 L12.5 7.8 L15 10.3 L9.5 15.5 Z" fill="#d9506e"/></svg>
<svg class="a" style="left:332.5px;top:309px" width="20" height="18"><rect x="0.5" y="0.5" width="13" height="12" fill="#fff" stroke="#555" stroke-width="1.4"/><g stroke="#c8c8c8" stroke-width="0.8"><line x1="1" x2="13" y1="4.3" y2="4.3"/><line x1="1" x2="13" y1="8.3" y2="8.3"/><line x1="3.3" x2="3.3" y1="1" y2="12"/><line x1="10.7" x2="10.7" y1="1" y2="12"/></g><rect x="3.3" y="1.8" width="7.4" height="4" rx="0.8" fill="#e8b964"/></svg>
<div class="a menu" style="left:501.5px;top:53.5px;width:167.5px;height:309px;box-shadow:1px 1px 2px rgba(0,0,0,.15)"></div>
<div class="a" style="left:502.8px;top:216.5px;width:165.5px;height:40px;background:#a5a5a5"></div>
<div class="a" style="left:502.5px;top:337.3px;width:166px;height:1px;background:#d6d6d6"></div>
<div class="mi" style="left:543.8px;top:72.1px"><u>G</u>reater Than...</div>
<div class="mi" style="left:543.8px;top:112.5px"><u>L</u>ess Than...</div>
<div class="mi" style="left:543.8px;top:152.9px"><u>B</u>etween...</div>
<div class="mi" style="left:543.8px;top:193.3px"><u>E</u>qual To...</div>
<div class="mi" style="left:543.8px;top:233.6px"><u>T</u>ext that Contains...</div>
<div class="mi" style="left:543.8px;top:273.8px"><u>A</u> Date Occurring...</div>
<div class="mi" style="left:543.8px;top:314.2px"><u>D</u>uplicate Values...</div>
<div class="mr" style="left:531px;top:345.3px"><u>M</u>ore Rules...</div>
<svg class="a" style="left:508px;top:61.7px" width="40" height="33" viewBox="0 0 40 33"><rect x="0.5" y="0.5" width="28" height="27" fill="#fff" stroke="#555" stroke-width="1" rx="1"/><rect x="8" y="11.6" width="13" height="4.8" fill="#e8b964"/><line x1="1" x2="28" y1="5.90" y2="5.90" stroke="#bdbdbd" stroke-width="0.9"/><line x1="1" x2="28" y1="11.30" y2="11.30" stroke="#bdbdbd" stroke-width="0.9"/><line x1="1" x2="28" y1="16.70" y2="16.70" stroke="#bdbdbd" stroke-width="0.9"/><line x1="1" x2="28" y1="22.10" y2="22.10" stroke="#bdbdbd" stroke-width="0.9"/><line x1="7.3" x2="7.3" y1="1" y2="27" stroke="#bdbdbd" stroke-width="0.9"/><line x1="21.4" x2="21.4" y1="1" y2="27" stroke="#bdbdbd" stroke-width="0.9"/><rect x="14.5" y="16" width="15" height="12.5" rx="1.5" fill="#fff" stroke="#555" stroke-width="1"/><path d="M19.5 19 L24.5 22 L19.5 25" stroke="#333" stroke-width="1.1" fill="none"/></svg>
<svg class="a" style="left:508px;top:101.7px" width="40" height="33" viewBox="0 0 40 33"><rect x="0.5" y="0.5" width="28" height="27" fill="#fff" stroke="#555" stroke-width="1" rx="1"/><rect x="8" y="11.6" width="13" height="4.8" fill="#e8b964"/><line x1="1" x2="28" y1="5.90" y2="5.90" stroke="#bdbdbd" stroke-width="0.9"/><line x1="1" x2="28" y1="11.30" y2="11.30" stroke="#bdbdbd" stroke-width="0.9"/><line x1="1" x2="28" y1="16.70" y2="16.70" stroke="#bdbdbd" stroke-width="0.9"/><line x1="1" x2="28" y1="22.10" y2="22.10" stroke="#bdbdbd" stroke-width="0.9"/><line x1="7.3" x2="7.3" y1="1" y2="27" stroke="#bdbdbd" stroke-width="0.9"/><line x1="21.4" x2="21.4" y1="1" y2="27" stroke="#bdbdbd" stroke-width="0.9"/><rect x="14.5" y="16.5" width="15" height="12.5" rx="1.5" fill="#fff" stroke="#555" stroke-width="1"/><path d="M24.5 19.5 L19.5 22.5 L24.5 25.5" stroke="#333" stroke-width="1.1" fill="none"/></svg>
<svg class="a" style="left:508px;top:142px" width="40" height="33" viewBox="0 0 40 33"><rect x="0.5" y="0.5" width="28" height="27" fill="#fff" stroke="#555" stroke-width="1" rx="1"/><rect x="1" y="5.9" width="6" height="5.4" fill="#2e6ab1"/><rect x="22" y="5.9" width="6" height="5.4" fill="#2e6ab1"/><rect x="8" y="11.6" width="13" height="4.8" fill="#e8b964"/><line x1="1" x2="28" y1="5.90" y2="5.90" stroke="#bdbdbd" stroke-width="0.9"/><line x1="1" x2="28" y1="11.30" y2="11.30" stroke="#bdbdbd" stroke-width="0.9"/><line x1="1" x2="28" y1="16.70" y2="16.70" stroke="#bdbdbd" stroke-width="0.9"/><line x1="1" x2="28" y1="22.10" y2="22.10" stroke="#bdbdbd" stroke-width="0.9"/><line x1="7.3" x2="7.3" y1="1" y2="27" stroke="#bdbdbd" stroke-width="0.9"/><line x1="21.4" x2="21.4" y1="1" y2="27" stroke="#bdbdbd" stroke-width="0.9"/></svg>
<svg class="a" style="left:508px;top:182.3px" width="40" height="33" viewBox="0 0 40 33"><rect x="0.5" y="0.5" width="28" height="27" fill="#fff" stroke="#555" stroke-width="1" rx="1"/><rect x="8" y="11.6" width="13" height="4.8" fill="#e8b964"/><line x1="1" x2="28" y1="5.90" y2="5.90" stroke="#bdbdbd" stroke-width="0.9"/><line x1="1" x2="28" y1="11.30" y2="11.30" stroke="#bdbdbd" stroke-width="0.9"/><line x1="1" x2="28" y1="16.70" y2="16.70" stroke="#bdbdbd" stroke-width="0.9"/><line x1="1" x2="28" y1="22.10" y2="22.10" stroke="#bdbdbd" stroke-width="0.9"/><line x1="7.3" x2="7.3" y1="1" y2="27" stroke="#bdbdbd" stroke-width="0.9"/><line x1="21.4" x2="21.4" y1="1" y2="27" stroke="#bdbdbd" stroke-width="0.9"/><rect x="14.5" y="16.5" width="15" height="12.5" rx="1.5" fill="#fff" stroke="#555" stroke-width="1"/><path d="M19 21 L25 21 M19 24 L25 24" stroke="#333" stroke-width="1.1" fill="none"/></svg>
<svg class="a" style="left:508.2px;top:224.2px" width="38.8" height="29.2" viewBox="0 0 38.8 29.2"><rect x="0.5" y="0.5" width="26.8" height="23.2" fill="#fff" stroke="#555" stroke-width="1" rx="1"/><rect x="8" y="10.1" width="13" height="4.0" fill="#e8b964"/><line x1="1" x2="26.8" y1="5.14" y2="5.14" stroke="#bdbdbd" stroke-width="0.9"/><line x1="1" x2="26.8" y1="9.78" y2="9.78" stroke="#bdbdbd" stroke-width="0.9"/><line x1="1" x2="26.8" y1="14.42" y2="14.42" stroke="#bdbdbd" stroke-width="0.9"/><line x1="1" x2="26.8" y1="19.06" y2="19.06" stroke="#bdbdbd" stroke-width="0.9"/><line x1="7.3" x2="7.3" y1="1" y2="23.2" stroke="#bdbdbd" stroke-width="0.9"/><line x1="21.4" x2="21.4" y1="1" y2="23.2" stroke="#bdbdbd" stroke-width="0.9"/><rect x="14" y="14.3" width="15.6" height="12.9" rx="1.5" fill="#fff" stroke="#555" stroke-width="1"/><text x="21.8" y="24.6" font-size="11.5" text-anchor="middle" font-family="Liberation Serif" fill="#222">ab</text></svg>
<svg class="a" style="left:508.2px;top:264.4px" width="39.5" height="29.5" viewBox="0 0 39.5 29.5"><rect x="0.5" y="0.5" width="27.5" height="23.5" fill="#fff" stroke="#555" stroke-width="1" rx="1"/><rect x="6.2" y="9.9" width="15.2" height="5.3" fill="#e8b964"/><line x1="1" x2="27.5" y1="5.20" y2="5.20" stroke="#bdbdbd" stroke-width="0.9"/><line x1="1" x2="27.5" y1="9.90" y2="9.90" stroke="#bdbdbd" stroke-width="0.9"/><line x1="1" x2="27.5" y1="14.60" y2="14.60" stroke="#bdbdbd" stroke-width="0.9"/><line x1="1" x2="27.5" y1="19.30" y2="19.30" stroke="#bdbdbd" stroke-width="0.9"/><line x1="7.3" x2="7.3" y1="1" y2="23.5" stroke="#bdbdbd" stroke-width="0.9"/><line x1="21.4" x2="21.4" y1="1" y2="23.5" stroke="#bdbdbd" stroke-width="0.9"/><rect x="12.8" y="12.2" width="16.3" height="15.1" fill="#fff" stroke="#555"/><rect x="12.8" y="12.2" width="16.3" height="3" fill="#2a2a2a"/><line x1="13.3" x2="29.1" y1="18.5" y2="18.5" stroke="#888" stroke-width="0.7"/><line x1="13.3" x2="29.1" y1="22.2" y2="22.2" stroke="#888" stroke-width="0.7"/><line x1="13.3" x2="29.1" y1="26.0" y2="26.0" stroke="#888" stroke-width="0.7"/><line x1="16.1" x2="16.1" y1="15.2" y2="27.299999999999997" stroke="#888" stroke-width="0.7"/><line x1="19.3" x2="19.3" y1="15.2" y2="27.299999999999997" stroke="#888" stroke-width="0.7"/><line x1="22.6" x2="22.6" y1="15.2" y2="27.299999999999997" stroke="#888" stroke-width="0.7"/><line x1="25.8" x2="25.8" y1="15.2" y2="27.299999999999997" stroke="#888" stroke-width="0.7"/><rect x="23.4" y="18.0" width="2.6" height="2.6" fill="none" stroke="#e57319" stroke-width="1.2"/></svg>
<svg class="a" style="left:508px;top:303.1px" width="40" height="33" viewBox="0 0 40 33"><rect x="0.5" y="0.5" width="28" height="27" fill="#fff" stroke="#555" stroke-width="1" rx="1"/><rect x="8" y="5.9" width="13" height="5.4" fill="#e8b964"/><rect x="8" y="16.7" width="13" height="5.4" fill="#e8b964"/><line x1="10" x2="19" y1="8.4" y2="8.4" stroke="#b09060" stroke-width="0.8"/><line x1="10" x2="19" y1="19.2" y2="19.2" stroke="#b09060" stroke-width="0.8"/><line x1="1" x2="28" y1="5.90" y2="5.90" stroke="#bdbdbd" stroke-width="0.9"/><line x1="1" x2="28" y1="11.30" y2="11.30" stroke="#bdbdbd" stroke-width="0.9"/><line x1="1" x2="28" y1="16.70" y2="16.70" stroke="#bdbdbd" stroke-width="0.9"/><line x1="1" x2="28" y1="22.10" y2="22.10" stroke="#bdbdbd" stroke-width="0.9"/><line x1="7.3" x2="7.3" y1="1" y2="27" stroke="#bdbdbd" stroke-width="0.9"/><line x1="21.4" x2="21.4" y1="1" y2="27" stroke="#bdbdbd" stroke-width="0.9"/></svg>
<!-- MENU END -->
<!-- DIALOG START -->
<div class="a" style="left:168.3px;top:388px;width:418.4px;height:186px;background:#fff;overflow:hidden">
<div class="a" style="left:0;top:10.0px;width:420px;height:1px;background:#dadada"></div>
<div class="a" style="left:0;top:28.3px;width:420px;height:1px;background:#dadada"></div>
<div class="a" style="left:0;top:46.5px;width:420px;height:1px;background:#dadada"></div>
<div class="a" style="left:0;top:64.8px;width:420px;height:1px;background:#dadada"></div>
<div class="a" style="left:0;top:83.1px;width:420px;height:1px;background:#dadada"></div>
<div class="a" style="left:0;top:101.4px;width:420px;height:1px;background:#dadada"></div>
<div class="a" style="left:0;top:119.6px;width:420px;height:1px;background:#dadada"></div>
<div class="a" style="left:0;top:137.9px;width:420px;height:1px;background:#dadada"></div>
<div class="a" style="left:0;top:156.2px;width:420px;height:1px;background:#dadada"></div>
<div class="a" style="left:0;top:174.4px;width:420px;height:1px;background:#dadada"></div>
<div class="a" style="left:59.8px;top:0;width:1px;height:186px;background:#dadada"></div>
<div class="a" style="left:120.7px;top:0;width:1px;height:186px;background:#dadada"></div>
<div class="a" style="left:181.9px;top:0;width:1px;height:186px;background:#dadada"></div>
<div class="a" style="left:242.2px;top:0;width:1px;height:186px;background:#dadada"></div>
<div class="a" style="left:303.2px;top:0;width:1px;height:186px;background:#dadada"></div>
<div class="a" style="left:364.2px;top:0;width:1px;height:186px;background:#dadada"></div>
</div>
<div class="a" style="left:173.2px;top:390.7px;width:412px;height:120.8px;background:#f0f0f0;border:1px solid #d8a283;box-shadow:0 0 0 2px rgba(0,0,0,.06),0 4px 9px rgba(0,0,0,.22)"></div>
<div class="a" style="left:174.2px;top:391.7px;width:410px;height:28.1px;background:#fff"></div>
<div class="t" style="left:181.5px;top:400px;font-size:11.1px;color:#222">Text That Contains</div>
<div class="t" style="left:514px;top:399.5px;font-size:11.5px;color:#222">?</div>
<svg class="a" style="left:555px;top:399.5px" width="12" height="12"><path d="M1 1 L11 11 M11 1 L1 11" stroke="#222" stroke-width="1.1"/></svg>
<div class="t" style="left:180.4px;top:428.3px;font-size:10px;font-weight:bold;color:#111">Format cells that contain the text:</div>
<div class="a" style="left:179.8px;top:451.2px;width:172.5px;height:18.3px;background:#fff;border:1px solid #b0b0b0"></div>
<div class="t" style="left:183px;top:455.5px;font-size:10.5px;color:#111">No</div>
<div class="a" style="left:352px;top:451px;width:19px;height:18.5px;background:#f4f4f4;border:1.5px solid #c4c4c4"></div>
<svg class="a" style="left:355px;top:453px" width="12" height="14"><path d="M5.5 9.5 L5.5 3.5" stroke="#111" stroke-width="2"/><path d="M2 5.5 L5.5 1.8 L9 5.5 Z" fill="#111"/><rect x="2" y="10.5" width="7" height="1.5" fill="#111"/></svg>
<div class="t" style="left:380px;top:456px;font-size:10.4px;color:#333">with</div>
<div class="a" style="left:406.5px;top:451px;width:171px;height:17.7px;background:#fff;border:1px solid #a9a9a9"></div>
<div class="t" style="left:410px;top:455px;font-size:9.8px;color:#111">Green Fill with Dark Green Text</div>
<div class="a" style="left:561px;top:452px;width:16px;height:16px;background:#e3f0fb;border:1px solid #3d7bc0"></div>
<svg class="a" style="left:563.5px;top:456px" width="11" height="8"><path d="M1.5 1.5 L5.5 5.5 L9.5 1.5" stroke="#222" stroke-width="1.1" fill="none"/></svg>
<div class="a" style="left:406.3px;top:469.5px;width:172.4px;height:91.7px;background:#fff;border:1px solid #767676"></div>
<div class="t" style="left:409px;top:473.1px;font-size:9.8px;color:#111">Light Red Fill with Dark Red Text</div>
<div class="t" style="left:409px;top:486.0px;font-size:9.8px;color:#111">Yellow Fill with Dark Yellow Text</div>
<div class="a" style="left:407.3px;top:496.8px;width:170.4px;height:12.3px;background:#99c9f3;border:1px dotted #333"></div>
<div class="t" style="left:409px;top:498.9px;font-size:9.8px;color:#111">Green Fill with Dark Green Text</div>
<div class="t" style="left:409px;top:511.8px;font-size:9.8px;color:#111">Light Red Fill</div>
<div class="t" style="left:409px;top:524.7px;font-size:9.8px;color:#111">Red Text</div>
<div class="t" style="left:409px;top:537.6px;font-size:9.8px;color:#111">Red Border</div>
<div class="t" style="left:409px;top:550.5px;font-size:9.8px;color:#111">Custom Format...</div>
<svg class="a" style="left:208px;top:536px" width="215" height="28" viewBox="0 0 215 28"><g fill="none" stroke="#fff" stroke-width="4" stroke-linejoin="round" stroke-linecap="round">
<g transform="translate(5.4,5.9)">
<path d="M0.5 1.5 L7.8 1.5 C7.3 7 5 12.5 0.5 16.5 M2.2 5.2 L8.2 13.5" />
<path d="M9.5 1.5 L16.8 1.5 C16 8.5 13.5 14 9 17.5 M10.8 6 C12.5 11 14.8 14.8 18 17.5" />
</g>
<g transform="translate(26.9,4.8)">
<path d="M2 3.8 L15.8 3.8 L15.8 12.3 L2 12.3 Z M2 8 L15.8 8 M8.9 0.2 L8.9 15 C8.9 16.8 9.8 17.4 11.5 17.4 L16 17.4 C17 17.4 17.6 16.8 17.6 15" />
</g>
<g transform="translate(47.8,5.9)">
<path d="M1 18 L1 1 L16.8 1 L16.8 15.8 C16.8 17.2 16.2 17.6 14.5 17.6 M3.5 4.8 L8.2 13 M8.2 4.8 C7.4 8.8 5.6 12 3 15 M10 4.8 L14.5 13 M14.5 4.8 C13.8 8.8 12 12 9.3 15" />
</g>
</g><g fill="none" stroke="#000" stroke-width="2" stroke-linejoin="miter" stroke-linecap="butt">
<g transform="translate(5.4,5.9)">
<path d="M0.5 1.5 L7.8 1.5 C7.3 7 5 12.5 0.5 16.5 M2.2 5.2 L8.2 13.5" />
<path d="M9.5 1.5 L16.8 1.5 C16 8.5 13.5 14 9 17.5 M10.8 6 C12.5 11 14.8 14.8 18 17.5" />
</g>
<g transform="translate(26.9,4.8)">
<path d="M2 3.8 L15.8 3.8 L15.8 12.3 L2 12.3 Z M2 8 L15.8 8 M8.9 0.2 L8.9 15 C8.9 16.8 9.8 17.4 11.5 17.4 L16 17.4 C17 17.4 17.6 16.8 17.6 15" />
</g>
<g transform="translate(47.8,5.9)">
<path d="M1 18 L1 1 L16.8 1 L16.8 15.8 C16.8 17.2 16.2 17.6 14.5 17.6 M3.5 4.8 L8.2 13 M8.2 4.8 C7.4 8.8 5.6 12 3 15 M10 4.8 L14.5 13 M14.5 4.8 C13.8 8.8 12 12 9.3 15" />
</g>
</g></svg>
<svg class="a" style="left:270px;top:536px" width="150" height="30"><text transform="translate(16.04,21.7) scale(0.64,1)" font-family="Liberation Sans" font-size="19.5" fill="#fff" stroke="#fff" stroke-width="3.2" stroke-linejoin="round">w</text><text transform="translate(25.04,21.7) scale(0.64,1)" font-family="Liberation Sans" font-size="19.5" fill="#fff" stroke="#fff" stroke-width="3.2" stroke-linejoin="round">w</text><text transform="translate(34.04,21.7) scale(0.64,1)" font-family="Liberation Sans" font-size="19.5" fill="#fff" stroke="#fff" stroke-width="3.2" stroke-linejoin="round">w</text><text transform="translate(43.90,21.7) scale(1.0,1)" font-family="Liberation Sans" font-size="19.5" fill="#fff" stroke="#fff" stroke-width="3.2" stroke-linejoin="round">.</text><text transform="translate(59.70,21.7) scale(0.92,1)" font-family="Liberation Sans" font-size="19.5" fill="#fff" stroke="#fff" stroke-width="3.2" stroke-linejoin="round">p</text><text transform="translate(69.80,21.7) scale(1.0,1)" font-family="Liberation Sans" font-size="19.5" fill="#fff" stroke="#fff" stroke-width="3.2" stroke-linejoin="round">c</text><text transform="translate(77.70,21.7) scale(0.92,1)" font-family="Liberation Sans" font-size="19.5" fill="#fff" stroke="#fff" stroke-width="3.2" stroke-linejoin="round">p</text><text transform="translate(87.80,21.7) scale(1.0,1)" font-family="Liberation Sans" font-size="19.5" fill="#fff" stroke="#fff" stroke-width="3.2" stroke-linejoin="round">c</text><text transform="translate(97.90,21.7) scale(1.0,1)" font-family="Liberation Sans" font-size="19.5" fill="#fff" stroke="#fff" stroke-width="3.2" stroke-linejoin="round">.</text><text transform="translate(113.88,21.7) scale(0.6,1)" font-family="Liberation Sans" font-size="19.5" fill="#fff" stroke="#fff" stroke-width="3.2" stroke-linejoin="round">m</text><text transform="translate(124.10,21.7) scale(1.0,1)" font-family="Liberation Sans" font-size="19.5" fill="#fff" stroke="#fff" stroke-width="3.2" stroke-linejoin="round">e</text><text transform="translate(16.04,21.7) scale(0.64,1)" font-family="Liberation Sans" font-size="19.5" fill="#000" stroke="#000" stroke-width="0.55">w</text><text transform="translate(25.04,21.7) scale(0.64,1)" font-family="Liberation Sans" font-size="19.5" fill="#000" stroke="#000" stroke-width="0.55">w</text><text transform="translate(34.04,21.7) scale(0.64,1)" font-family="Liberation Sans" font-size="19.5" fill="#000" stroke="#000" stroke-width="0.55">w</text><text transform="translate(43.90,21.7) scale(1.0,1)" font-family="Liberation Sans" font-size="19.5" fill="#000" stroke="#000" stroke-width="0.55">.</text><text transform="translate(59.70,21.7) scale(0.92,1)" font-family="Liberation Sans" font-size="19.5" fill="#000" stroke="#000" stroke-width="0.55">p</text><text transform="translate(69.80,21.7) scale(1.0,1)" font-family="Liberation Sans" font-size="19.5" fill="#000" stroke="#000" stroke-width="0.55">c</text><text transform="translate(77.70,21.7) scale(0.92,1)" font-family="Liberation Sans" font-size="19.5" fill="#000" stroke="#000" stroke-width="0.55">p</text><text transform="translate(87.80,21.7) scale(1.0,1)" font-family="Liberation Sans" font-size="19.5" fill="#000" stroke="#000" stroke-width="0.55">c</text><text transform="translate(97.90,21.7) scale(1.0,1)" font-family="Liberation Sans" font-size="19.5" fill="#000" stroke="#000" stroke-width="0.55">.</text><text transform="translate(113.88,21.7) scale(0.6,1)" font-family="Liberation Sans" font-size="19.5" fill="#000" stroke="#000" stroke-width="0.55">m</text><text transform="translate(124.10,21.7) scale(1.0,1)" font-family="Liberation Sans" font-size="19.5" fill="#000" stroke="#000" stroke-width="0.55">e</text></svg>
<svg class="a" style="left:277px;top:539px" width="10" height="23"><path d="M7.5 3 C3 7 3 16 7.5 20" fill="none" stroke="#fff" stroke-width="3.4"/><path d="M7.5 3 C3 7 3 16 7.5 20" fill="none" stroke="#000" stroke-width="1.5"/></svg>
<svg class="a" style="left:405px;top:541px" width="11" height="22"><path d="M3.5 3 C8 7 8 14 3.5 18.5" fill="none" stroke="#fff" stroke-width="3.4"/><path d="M3.5 3 C8 7 8 14 3.5 18.5" fill="none" stroke="#000" stroke-width="1.5"/></svg>
<!-- DIALOG END -->
</body></html>
